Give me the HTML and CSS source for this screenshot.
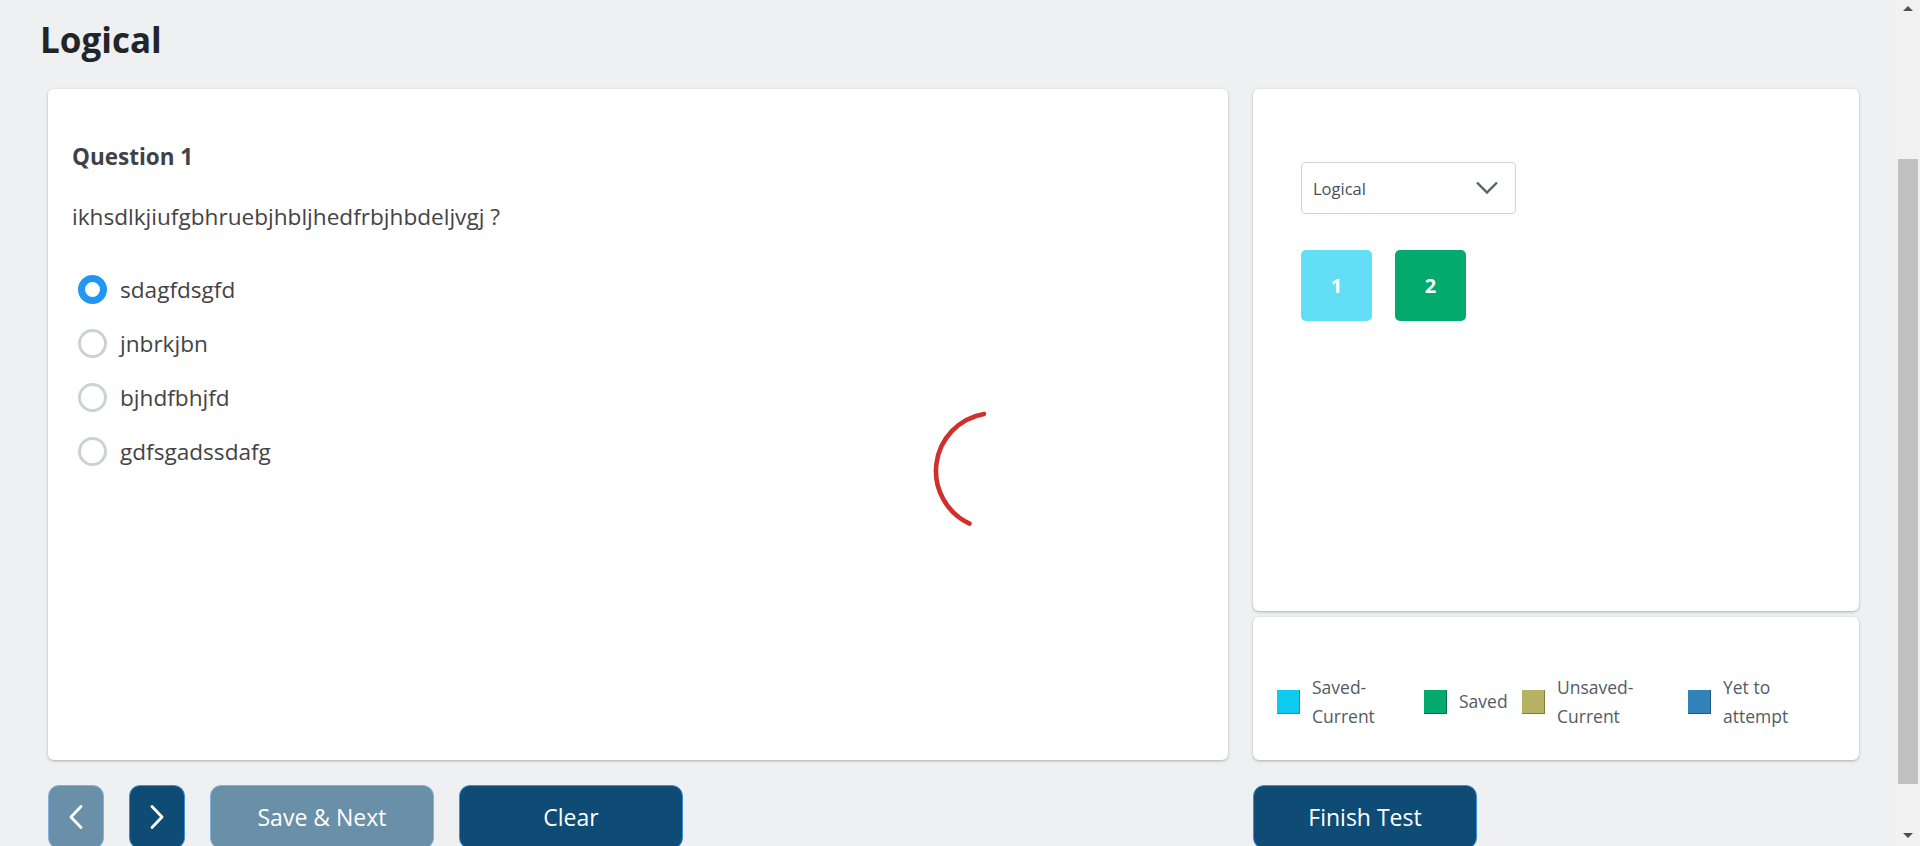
FILE: index.html
```html
<!DOCTYPE html>
<html lang="en">
<head>
<meta charset="utf-8">
<title>Logical</title>
<link rel="stylesheet" href="styles.css">
</head>
<body>
<div class="app">
  <main class="page">
    <h1 class="title">Logical</h1>
    <div class="content">
      <section class="card question-card">
        <h2 class="q-title">Question 1</h2>
        <p class="q-text">ikhsdlkjiufgbhruebjhbljhedfrbjhbdeljvgj ?</p>
        <ul class="options">
          <li class="option"><span class="radio checked"></span><span class="opt-label">sdagfdsgfd</span></li>
          <li class="option"><span class="radio"></span><span class="opt-label">jnbrkjbn</span></li>
          <li class="option"><span class="radio"></span><span class="opt-label">bjhdfbhjfd</span></li>
          <li class="option"><span class="radio"></span><span class="opt-label">gdfsgadssdafg</span></li>
        </ul>
        <svg class="spinner" width="140" height="140" viewBox="0 0 140 140">
          <path d="M45.5 122.6 A58 58 0 0 1 59.9 12.9" fill="none" stroke="#d0302c" stroke-width="4.6" stroke-linecap="round"/>
        </svg>
      </section>
      <aside class="side">
        <section class="card palette-card">
          <div class="select">
            <span class="select-text">Logical</span>
            <svg class="chev" width="24" height="14" viewBox="0 0 24 14"><path d="M2 1.5 L12 11.5 L22 1.5" fill="none" stroke="#5b6168" stroke-width="2.4"/></svg>
          </div>
          <div class="qnums">
            <span class="qnum current">1</span>
            <span class="qnum saved">2</span>
          </div>
        </section>
        <section class="card legend-card">
          <div class="legend">
            <div class="legend-item"><span class="swatch sw-current"></span><span class="legend-label">Saved-<br>Current</span></div>
            <div class="legend-item"><span class="swatch sw-saved"></span><span class="legend-label">Saved</span></div>
            <div class="legend-item"><span class="swatch sw-unsaved"></span><span class="legend-label">Unsaved-<br>Current</span></div>
            <div class="legend-item"><span class="swatch sw-yet"></span><span class="legend-label">Yet to<br>attempt</span></div>
          </div>
        </section>
      </aside>
    </div>
    <div class="actions">
      <div class="nav-left">
        <button class="btn btn-icon btn-disabled" aria-label="Previous"><svg width="16" height="24" viewBox="0 0 16 24"><path d="M13 1.5 L3 12 L13 22.5" fill="none" stroke="#fff" stroke-width="2.8" stroke-linecap="round" stroke-linejoin="round"/></svg></button>
        <button class="btn btn-icon btn-primary" aria-label="Next"><svg width="16" height="24" viewBox="0 0 16 24"><path d="M3 1.5 L13 12 L3 22.5" fill="none" stroke="#fff" stroke-width="2.8" stroke-linecap="round" stroke-linejoin="round"/></svg></button>
        <button class="btn btn-wide btn-disabled">Save &amp; Next</button>
        <button class="btn btn-wide btn-primary">Clear</button>
      </div>
      <div class="nav-right">
        <button class="btn btn-wide btn-primary">Finish Test</button>
      </div>
    </div>
  </main>
  <div class="scrollbar">
    <span class="sb-arrow sb-up"></span>
    <span class="sb-thumb"></span>
    <span class="sb-arrow sb-down"></span>
  </div>
</div>
</body>
</html>
```

FILE: styles.css
```css
* { box-sizing: border-box; }
html, body { margin: 0; padding: 0; }
body {
  background: #eff0f2;
  font-family: "Open Sans", "Noto Sans", sans-serif;
  color: #444;
  height: 846px;
  overflow: hidden;
}
.app {
  display: flex;
  height: 846px;
}
.page {
  flex: 1;
  min-width: 0;
}
.title {
  margin: 0;
  height: 89px;
  padding: 18px 0 0 40px;
  font-size: 35px;
  line-height: 44px;
  font-weight: 700;
  color: #212529;
}
.content {
  display: grid;
  grid-template-columns: 1180px 606px;
  column-gap: 25px;
  margin-left: 48px;
  height: 671px;
}
.card {
  background: #fff;
  border-radius: 6px;
  box-shadow: 0 1px 3px rgba(0,0,0,0.28);
}
.question-card {
  position: relative;
  padding: 53px 24px 0 24px;
}
.q-title {
  margin: 0;
  font-size: 22.5px;
  line-height: 30px;
  font-weight: 700;
  color: #3f4247;
}
.q-text {
  margin: 30px 0 0 0;
  font-size: 22.6px;
  line-height: 30px;
  color: #444;
}
.options {
  list-style: none;
  margin: 30px 0 0 0;
  padding: 0;
}
.option {
  display: flex;
  align-items: center;
  height: 54px;
  font-size: 22.6px;
  color: #444;
}
.radio {
  width: 29px;
  height: 29px;
  border-radius: 50%;
  border: 3px solid #cdd1d6;
  margin-left: 6px;
  margin-right: 13px;
  flex: none;
}
.radio.checked {
  border: 7px solid #2196f3;
}
.spinner {
  position: absolute;
  left: 876px;
  top: 312px;
}
.side {
  display: flex;
  flex-direction: column;
  gap: 6px;
}
.palette-card {
  height: 522px;
  padding: 73px 0 0 48px;
}
.select {
  width: 215px;
  height: 52px;
  border: 1px solid #ced4da;
  border-radius: 4px;
  display: flex;
  align-items: center;
  justify-content: space-between;
  padding: 0 16px 0 11px;
}
.select-text {
  font-size: 16.5px;
  color: #495057;
}
.qnums {
  display: flex;
  gap: 23px;
  margin-top: 36px;
}
.qnum {
  width: 71px;
  height: 71px;
  border-radius: 5px;
  display: flex;
  align-items: center;
  justify-content: center;
  color: #fff;
  font-weight: 700;
  font-size: 20px;
}
.qnum.current { background: #63def7; }
.qnum.saved { background: #04a96d; }
.legend-card {
  flex: 1;
  padding: 56px 0 0 24px;
}
.legend {
  display: grid;
  grid-template-columns: 147px 98px 166px auto;
}
.legend-item {
  display: flex;
  align-items: center;
}
.swatch {
  width: 23px;
  height: 24px;
  flex: none;
  margin-right: 12px;
}
.sw-current { background: #0dcaf0; border-right: 1px solid #0a9fbd; border-bottom: 1px solid #0a9fbd; }
.sw-saved { background: #04a96d; border-right: 1px solid #02704a; border-bottom: 1px solid #02704a; }
.sw-unsaved { background: #b5b264; border-right: 1px solid #7e7b3d; border-bottom: 1px solid #7e7b3d; }
.sw-yet { background: #3182b8; border-right: 1px solid #1f5a82; border-bottom: 1px solid #1f5a82; }
.legend-label {
  font-size: 17.5px;
  line-height: 28.5px;
  color: #545b66;
}
.actions {
  display: grid;
  grid-template-columns: 1180px 606px;
  column-gap: 25px;
  margin: 25px 0 0 48px;
}
.nav-left {
  display: flex;
  gap: 25px;
}
.btn {
  height: 64px;
  border-radius: 11px;
  border: 1px solid #3d8fd9;
  color: #fff;
  font-family: "Open Sans", "Noto Sans", sans-serif;
  font-size: 23px;
  display: flex;
  align-items: center;
  justify-content: center;
  padding: 0;
  margin: 0;
}
.btn-icon { width: 56px; }
.btn-wide { width: 224px; }
.btn-primary { background: #0f4c75; }
.btn-disabled { background: #6a8fa8; border-color: #7fb3de; }
.scrollbar {
  width: 24px;
  flex: none;
  background: #f1f1f1;
  display: flex;
  flex-direction: column;
  align-items: center;
}
.sb-arrow {
  width: 0;
  height: 0;
  border-left: 5px solid transparent;
  border-right: 5px solid transparent;
  flex: none;
}
.sb-up {
  border-bottom: 5px solid #505050;
  margin-top: 6px;
}
.sb-thumb {
  width: 20px;
  height: 625px;
  background: #c1c1c1;
  margin-top: 148px;
  flex: none;
}
.sb-down {
  border-top: 5px solid #505050;
  margin-top: auto;
  margin-bottom: 8px;
}
```
